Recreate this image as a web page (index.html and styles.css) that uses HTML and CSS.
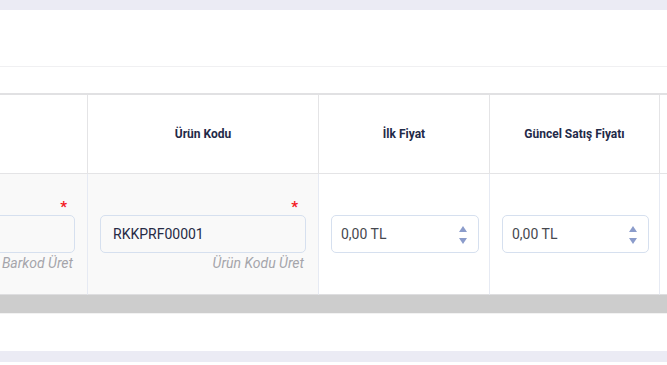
FILE: index.html
```html
<!DOCTYPE html>
<html lang="tr">
<head>
<meta charset="utf-8">
<link rel="stylesheet" href="styles.css">
</head>
<body>
  <div class="band"></div>
  <section class="card">
    <div class="card-head"></div>
    <div class="card-gap"></div>
    <div class="viewport">
      <div class="grid">
        <div class="th"></div>
        <div class="th">Ürün Kodu</div>
        <div class="th">İlk Fiyat</div>
        <div class="th">Güncel Satış Fiyatı</div>
        <div class="th th-last"></div>

        <div class="td td-code">
          <span class="req">*</span>
          <div class="input"></div>
          <span class="help">Barkod Üret</span>
        </div>
        <div class="td td-code">
          <span class="req">*</span>
          <div class="input">RKKPRF00001</div>
          <span class="help">Ürün Kodu Üret</span>
        </div>
        <div class="td td-price">
          <div class="input num">0,00 TL
            <span class="spin"><i class="up"></i><i class="down"></i></span>
          </div>
        </div>
        <div class="td td-price">
          <div class="input num">0,00 TL
            <span class="spin"><i class="up"></i><i class="down"></i></span>
          </div>
        </div>
        <div class="td td-last"></div>
      </div>
      <div class="scrollbar"></div>
    </div>
    <div class="card-foot"></div>
  </section>
  <div class="band band-bottom"></div>
</body>
</html>
```

FILE: styles.css
```css
* { box-sizing: border-box; }
html, body { margin: 0; padding: 0; background: #fff; }
body {
  font-family: Roboto, "Noto Sans", "Liberation Sans", sans-serif;
  width: 667px;
  height: 365px;
  overflow: hidden;
}
.band { height: 10px; background: #ebebf4; }
.band-bottom { height: 11px; }
.card { background: #fff; }
.card-head { height: 57px; border-bottom: 1px solid #f0f0f2; }
.card-gap { height: 26px; }
.viewport { overflow: hidden; border-top: 2px solid #e1e1e3; }
.grid {
  display: grid;
  grid-template-columns: 232px 231px 171px 170px 220px;
  grid-template-rows: 79px 121px;
  margin-left: -144px;
  width: 1024px;
}
.th {
  display: flex;
  align-items: center;
  justify-content: center;
  font-size: 12px;
  font-weight: 700;
  color: #1f2a48;
  border-right: 1px solid #e4e4e6;
  border-bottom: 1px solid #e4e4e6;
}
.td {
  border-right: 1px solid #e6eaf3;
  border-bottom: 1px solid #dedee0;
}
.th-last, .td-last { border-right: 0; }
.td-code {
  background: #f9f9f9;
  display: flex;
  flex-direction: column;
  justify-content: center;
  padding: 0 12px;
}
.td-price {
  display: flex;
  align-items: center;
  padding: 0 10px 0 12px;
}
.req {
  align-self: flex-end;
  color: #f4171f;
  font-size: 15px;
  line-height: 15px;
  height: 17px;
  padding-top: 2px;
  margin-right: 8px;
  font-weight: 700;
}
.input {
  width: 100%;
  height: 38px;
  border: 1px solid #d6e0ef;
  border-radius: 5px;
  background: #fff;
  font-size: 14px;
  line-height: 36px;
  padding: 0 12px;
  color: #262a45;
}
.td-code .input { background: #f9f9f9; }
.num {
  display: flex;
  justify-content: space-between;
  align-items: center;
  padding: 0 11px 0 9px;
  color: #46484f;
}
.spin {
  display: flex;
  flex-direction: column;
  gap: 6px;
  margin-top: 1px;
}
.spin i {
  display: block;
  width: 0;
  height: 0;
  border-left: 4.5px solid transparent;
  border-right: 4.5px solid transparent;
}
.spin .up { border-bottom: 6px solid #8b9ccb; }
.spin .down { border-top: 6px solid #8b9ccb; }
.help {
  align-self: flex-end;
  font-size: 14px;
  font-style: italic;
  color: #a5a5ab;
  line-height: 18px;
  height: 17px;
  margin-top: 1px;
  margin-right: 2px;
}
.scrollbar { height: 18px; background: #cdcdcd; }
.card-foot { height: 38px; border-top: 1px solid #f2f2f2; }
```
